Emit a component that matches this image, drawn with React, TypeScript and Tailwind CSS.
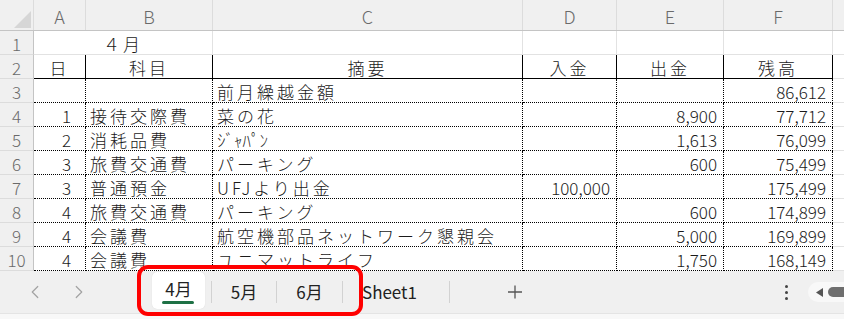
import React from "react";
import { ChevronLeft, ChevronRight } from "lucide-react";

type Align = "l" | "r" | "c";
type Cell = { t?: string; a?: Align; n?: boolean; tight?: boolean };

const COLS = [52, 127, 310, 94, 107, 109];

const rows: Cell[][] = [
  // row 2: headings
  [
    { t: "日", a: "c" },
    { t: "科目", a: "c" },
    { t: "摘要", a: "c" },
    { t: "入金", a: "c" },
    { t: "出金", a: "c" },
    { t: "残高", a: "c" },
  ],
  [{}, {}, { t: "前月繰越金額" }, {}, {}, { t: "86,612", a: "r", n: true }],
  [{ t: "1", a: "r", n: true }, { t: "接待交際費" }, { t: "菜の花" }, {}, { t: "8,900", a: "r", n: true }, { t: "77,712", a: "r", n: true }],
  [{ t: "2", a: "r", n: true }, { t: "消耗品費" }, { t: "ｼﾞｬﾊﾟﾝ", tight: true }, {}, { t: "1,613", a: "r", n: true }, { t: "76,099", a: "r", n: true }],
  [{ t: "3", a: "r", n: true }, { t: "旅費交通費" }, { t: "パーキング" }, {}, { t: "600", a: "r", n: true }, { t: "75,499", a: "r", n: true }],
  [{ t: "3", a: "r", n: true }, { t: "普通預金" }, { t: "UFJより出金" }, { t: "100,000", a: "r", n: true }, {}, { t: "175,499", a: "r", n: true }],
  [{ t: "4", a: "r", n: true }, { t: "旅費交通費" }, { t: "パーキング" }, {}, { t: "600", a: "r", n: true }, { t: "174,899", a: "r", n: true }],
  [{ t: "4", a: "r", n: true }, { t: "会議費" }, { t: "航空機部品ネットワーク懇親会" }, {}, { t: "5,000", a: "r", n: true }, { t: "169,899", a: "r", n: true }],
  [{ t: "4", a: "r", n: true }, { t: "会議費" }, { t: "ユニマットライフ" }, {}, { t: "1,750", a: "r", n: true }, { t: "168,149", a: "r", n: true }],
];

const jp = "font-['MS_PGothic','Noto_Sans_CJK_JP',sans-serif]";

function RowHeader({ n }: { n: number }) {
  return (
    <div className="w-[34px] h-[24px] shrink-0 flex items-center justify-center pt-[2px] bg-[#f0f0f0] border-r border-b border-r-[#c4c4c4] border-b-[#dcdcdc] text-[17px] font-light text-[#6a6a6a]">
      {n}
    </div>
  );
}

function DataRow({ cells, idx }: { cells: Cell[]; idx: number }) {
  const heading = idx === 0;
  return (
    <div className="flex">
      <RowHeader n={idx + 2} />
      {cells.map((c, i) => {
        const pad = c.a === "r" ? (i === 0 ? "justify-end pr-[14px]" : "justify-end pr-[6px]") : c.a === "c" ? "justify-center" : "justify-start pl-[4px]";
        const bottom = heading ? "border-b-black border-solid" : "border-b-black border-dotted";
        const textCls = c.n
          ? "text-[17px] font-light text-[#1a1a1a] font-['Noto_Sans_CJK_JP',sans-serif]"
          : c.tight
            ? `text-[17px] font-light text-[#1a1a1a] tracking-[0px] whitespace-nowrap ${jp}`
            : `text-[17px] font-light text-[#1a1a1a] tracking-[3px] whitespace-nowrap ${jp}`;
        return (
          <div
            key={i}
            style={{ width: COLS[i] }}
            className={`h-[24px] shrink-0 flex items-center pt-[3px] border-r border-b border-r-black ${bottom} ${pad}`}
          >
            <span className={textCls}>{c.t ?? ""}</span>
          </div>
        );
      })}
      <div className="h-[24px] flex-1 border-b border-[#e2e2e2]" />
    </div>
  );
}

function Sheet() {
  const letters = ["A", "B", "C", "D", "E", "F"];
  return (
    <div className="h-[271px] overflow-hidden">
      {/* column letters */}
      <div className="flex h-[31px] bg-[#f0f0f0] border-b border-[#c4c4c4]">
        <div className="w-[34px] h-full shrink-0 border-r border-[#dcdcdc] relative">
          <svg className="absolute left-[14px] top-[11px]" width="17" height="17" viewBox="0 0 17 17">
            <polygon points="17,0 17,17 0,17" fill="#d6d6d6" />
          </svg>
        </div>
        {letters.map((l, i) => (
          <div
            key={l}
            style={{ width: COLS[i] }}
            className="h-full shrink-0 flex items-center justify-center pt-[3px] border-r border-[#dcdcdc] text-[18px] font-light text-[#6a6a6a] font-['Noto_Sans_CJK_JP',sans-serif]"
          >
            {l}
          </div>
        ))}
        <div className="flex-1" />
      </div>

      {/* row 1: merged month title */}
      <div className="flex">
        <RowHeader n={1} />
        <div className="w-[179px] h-[24px] shrink-0 flex items-center justify-center pt-[3px] border-r border-b border-[#e2e2e2]">
          <span className={`text-[17px] font-light text-[#1a1a1a] tracking-[3px] ${jp}`}>４月</span>
        </div>
        {COLS.slice(2).map((w, i) => (
          <div key={i} style={{ width: w }} className="h-[24px] shrink-0 border-r border-b border-[#e2e2e2]" />
        ))}
        <div className="h-[24px] flex-1 border-b border-[#e2e2e2]" />
      </div>

      {rows.map((r, i) => (
        <DataRow key={i} cells={r} idx={i} />
      ))}
    </div>
  );
}

function Sep() {
  return <div className="w-px h-[22px] bg-[#d2d2d2] shrink-0" />;
}

function TabBar() {
  const tab = "text-[17px] text-[#222] font-['Noto_Sans_CJK_JP','Noto_Sans',sans-serif]";
  return (
    <div className="h-[42px] bg-[#f0f0f0] flex items-center">
      <div className="w-[152px] shrink-0 flex items-center pl-[24px] gap-[22px] text-[#a2a2a2]">
        <ChevronLeft size={22} strokeWidth={1.3} />
        <ChevronRight size={22} strokeWidth={1.3} />
      </div>
      <div className="w-[53px] h-[37px] shrink-0 self-start mt-[1px] bg-white rounded-[5px] shadow-[0_0_1px_rgba(0,0,0,0.15)] flex flex-col items-center justify-center relative">
        <span className={`${tab} leading-none -mt-[4px]`}>4月</span>
        <div className="absolute bottom-[5px] left-[10px] w-[32px] h-[3px] rounded-full bg-[#1e7145]" />
      </div>
      <div className="w-[6px] shrink-0" />
      <Sep />
      <div className="w-[64px] shrink-0 flex justify-center">
        <span className={tab}>5月</span>
      </div>
      <Sep />
      <div className="w-[65px] shrink-0 flex justify-center">
        <span className={tab}>6月</span>
      </div>
      <Sep />
      <div className="w-[106px] shrink-0 pl-[19px]">
        <span className={tab}>Sheet1</span>
      </div>
      <Sep />
      <div className="w-[130px] shrink-0 flex justify-center text-[#555]">
        <svg width="16" height="16" viewBox="0 0 16 16">
          <path d="M8 1.5v13M1 8h14" stroke="currentColor" strokeWidth="1.3" />
        </svg>
      </div>
      <div className="flex-1" />
      <div className="w-[6px] flex flex-col items-center gap-[3px] mr-[19px]">
        <div className="w-[3px] h-[3px] rounded-full bg-[#444]" />
        <div className="w-[3px] h-[3px] rounded-full bg-[#444]" />
        <div className="w-[3px] h-[3px] rounded-full bg-[#444]" />
      </div>
      <div className="w-[36px] h-[20px] shrink-0 bg-[#f8f8f8] rounded-l-full flex items-center pl-[8px] gap-[5px]">
        <svg width="7" height="9" viewBox="0 0 7 9">
          <polygon points="7,0 7,9 0,4.5" fill="#555" />
        </svg>
        <div className="flex-1 h-[10px] rounded-l-full bg-[#6e6e6e]" />
      </div>
    </div>
  );
}

export default function App() {
  return (
    <div className="w-[844px] h-[319px] overflow-hidden relative bg-white font-['Noto_Sans_CJK_JP',sans-serif]">
      <Sheet />
      <TabBar />
      <div className="h-[6px] bg-[#f8f8f8] border-t border-[#e4e4e4]" />
      {/* highlight around the month tabs */}
      <div className="absolute left-[137px] top-[265px] w-[226px] h-[51px] border-[4px] border-[#ff0000] rounded-[11px]" />
    </div>
  );
}
